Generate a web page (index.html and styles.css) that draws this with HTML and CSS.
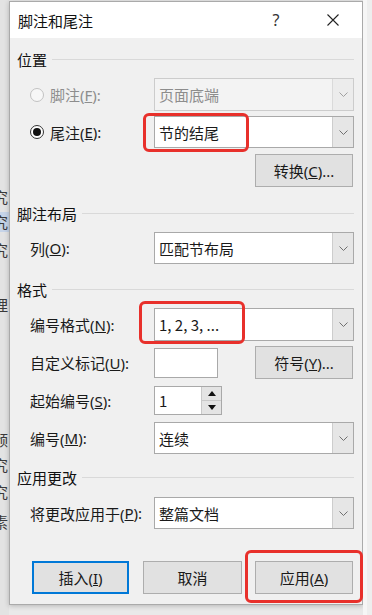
FILE: index.html
```html
<!DOCTYPE html>
<html lang="zh-CN">
  <head>
    <meta charset="UTF-8" />
    <meta name="viewport" content="width=device-width, initial-scale=1.0" />
    <title>脚注和尾注</title>
    <link rel="stylesheet" href="styles.css">
  </head>
  <body>
    <div class="desk">
      <div class="edge-left">
        <div class="frag f1">究</div>
        <div class="frag f2 hl">究</div>
        <div class="frag f3">究</div>
        <div class="frag f4">理</div>
        <div class="frag f5">颁</div>
        <div class="frag f6">究</div>
        <div class="frag f7">究</div>
        <div class="frag f8">素</div>
      </div>

      <div class="dialog">
        <div class="titlebar">
          <span class="title">脚注和尾注</span>
          <span class="help">?</span>
          <span class="close">
            <svg width="12" height="12" viewBox="0 0 12 12">
              <path d="M0.5 0.5 L11.5 11.5 M11.5 0.5 L0.5 11.5" stroke="#222" stroke-width="1.1" fill="none" />
            </svg>
          </span>
        </div>

        <div class="content">
          <div class="group-head g-pos"><span>位置</span><i class="rule"></i></div>

          <div class="row r-foot">
            <label class="opt disabled"><span class="radio"></span>脚注(<u>F</u>):</label>
            <div class="combo disabled">
              <span class="value">页面底端</span>
              <span class="drop"><svg width="9" height="5" viewBox="0 0 9 5"><path d="M0.5 0.5 L4.5 4.5 L8.5 0.5" stroke="#a0a0a0" fill="none" /></svg></span>
            </div>
          </div>

          <div class="row r-end">
            <label class="opt"><span class="radio checked"></span>尾注(<u>E</u>):</label>
            <div class="combo">
              <span class="value">节的结尾</span>
              <span class="drop"><svg width="9" height="5" viewBox="0 0 9 5"><path d="M0.5 0.5 L4.5 4.5 L8.5 0.5" stroke="#707070" fill="none" /></svg></span>
            </div>
          </div>

          <div class="row-end r-conv">
            <button class="btn btn-side">转换(<u>C</u>)...</button>
          </div>

          <div class="group-head g-layout"><span>脚注布局</span><i class="rule"></i></div>

          <div class="row r-col">
            <label>列(<u>O</u>):</label>
            <div class="combo">
              <span class="value">匹配节布局</span>
              <span class="drop"><svg width="9" height="5" viewBox="0 0 9 5"><path d="M0.5 0.5 L4.5 4.5 L8.5 0.5" stroke="#707070" fill="none" /></svg></span>
            </div>
          </div>

          <div class="group-head g-format"><span>格式</span><i class="rule"></i></div>

          <div class="row r-numfmt">
            <label>编号格式(<u>N</u>):</label>
            <div class="combo">
              <span class="value">1, 2, 3, ...</span>
              <span class="drop"><svg width="9" height="5" viewBox="0 0 9 5"><path d="M0.5 0.5 L4.5 4.5 L8.5 0.5" stroke="#707070" fill="none" /></svg></span>
            </div>
          </div>

          <div class="row r-custom">
            <label>自定义标记(<u>U</u>):</label>
            <div class="cell">
              <div class="textbox"></div>
              <button class="btn btn-side">符号(<u>Y</u>)...</button>
            </div>
          </div>

          <div class="row r-start">
            <label>起始编号(<u>S</u>):</label>
            <div class="cell">
              <div class="spin">
                <span class="value">1</span>
                <span class="arrows">
                  <span class="arrow"><svg width="8" height="5" viewBox="0 0 8 5"><path d="M0 5 L4 0 L8 5 Z" fill="#111" /></svg></span>
                  <span class="arrow"><svg width="8" height="5" viewBox="0 0 8 5"><path d="M0 0 L8 0 L4 5 Z" fill="#111" /></svg></span>
                </span>
              </div>
            </div>
          </div>

          <div class="row r-num">
            <label>编号(<u>M</u>):</label>
            <div class="combo">
              <span class="value">连续</span>
              <span class="drop"><svg width="9" height="5" viewBox="0 0 9 5"><path d="M0.5 0.5 L4.5 4.5 L8.5 0.5" stroke="#707070" fill="none" /></svg></span>
            </div>
          </div>

          <div class="group-head g-apply"><span>应用更改</span><i class="rule"></i></div>

          <div class="row r-applyto">
            <label>将更改应用于(<u>P</u>):</label>
            <div class="combo">
              <span class="value">整篇文档</span>
              <span class="drop"><svg width="9" height="5" viewBox="0 0 9 5"><path d="M0.5 0.5 L4.5 4.5 L8.5 0.5" stroke="#707070" fill="none" /></svg></span>
            </div>
          </div>

          <div class="actions">
            <button class="btn btn-insert default">插入(<u>I</u>)</button>
            <button class="btn btn-cancel">取消</button>
            <button class="btn btn-apply">应用(<u>A</u>)</button>
          </div>
        </div>
      </div>

      <div class="edge-right"></div>

      <!-- red annotation boxes drawn over the dialog -->
      <div class="mark mark-end"></div>
      <div class="mark mark-fmt"></div>
      <div class="mark mark-apply"></div>
    </div>
  </body>
</html>
```

FILE: styles.css
```css
* {
  box-sizing: border-box;
}
body {
  margin: 0;
  background: #e6e6e6;
  font-family: "Noto Sans", "Noto Sans CJK SC", sans-serif;
  font-size: 15px;
  color: #1a1a1a;
}
.desk {
  position: relative;
  width: 372px;
  height: 615px;
  display: flex;
  align-items: flex-start;
  overflow: hidden;
  background: #e9e9e9;
}

/* document behind the dialog */
.edge-left {
  width: 9px;
  height: 615px;
  flex-shrink: 0;
  background: #e3e3e3;
  overflow: hidden;
}
.frag {
  height: 20px;
  line-height: 20px;
  margin-left: -7px;
  font-family: "Noto Sans CJK SC", sans-serif;
  font-size: 15px;
  color: #3a3a3a;
}
.frag.hl {
  background: #c6d4e8;
}
.f1 { margin-top: 187px; }
.f2 { margin-top: 5px; }
.f3 { margin-top: 8px; }
.f4 { margin-top: 35px; }
.f5 { margin-top: 115px; }
.f6 { margin-top: 5px; }
.f7 { margin-top: 7px; }
.f8 { margin-top: 10px; }
.edge-right {
  flex: 1;
  height: 615px;
  background: #eeeeee;
  border-left: 4px solid #f6f6f6;
}

/* dialog */
.dialog {
  width: 354px;
  height: 604px;
  margin-top: 1px;
  flex-shrink: 0;
  background: #f0f0f0;
  border: 1px solid #aaaaaa;
  box-shadow: 0 1px 5px rgba(0, 0, 0, 0.22);
  display: flex;
  flex-direction: column;
}
.titlebar {
  height: 36px;
  background: #fff;
  display: flex;
  align-items: center;
  padding: 0 6px 0 8px;
}
.title {
  font-family: "Noto Sans CJK SC", sans-serif;
  font-size: 15px;
  color: #111;
}
.help {
  width: 20px;
  margin-left: auto;
  text-align: center;
  font-size: 16px;
  color: #333;
}
.close {
  width: 46px;
  margin-left: 24px;
  display: flex;
  justify-content: center;
  align-items: center;
}
.content {
  padding: 0 8px 0 7px;
}

.group-head {
  height: 20px;
  display: flex;
  align-items: center;
  font-family: "Noto Sans CJK SC", sans-serif;
  color: #111;
}
.rule {
  flex: 1;
  height: 1px;
  margin-left: 5px;
  background: #d9d9d9;
}
.g-pos { margin-top: 11px; }
.g-layout { margin-top: 16px; }
.g-format { margin-top: 15px; }
.g-apply { margin-top: 13px; }

.row {
  display: grid;
  grid-template-columns: 124px 200px;
  align-items: center;
  padding-left: 13px;
}
.row label {
  display: flex;
  align-items: center;
  white-space: nowrap;
}
.row-end {
  display: flex;
  justify-content: flex-end;
}
.r-foot { height: 33px; margin-top: 9px; }
.r-end { height: 32px; margin-top: 5px; }
.r-conv { height: 33px; margin-top: 6px; }
.r-col { height: 32px; margin-top: 9px; }
.r-numfmt { height: 33px; margin-top: 9px; }
.r-custom { height: 33px; margin-top: 5px; }
.r-start { height: 29px; margin-top: 7px; }
.r-num { height: 32px; margin-top: 7px; }
.r-applyto { height: 32px; margin-top: 10px; }

.opt.disabled {
  color: #8d8d8d;
}
.radio {
  width: 14px;
  height: 14px;
  margin-right: 6px;
  border: 1px solid #333;
  border-radius: 50%;
  background: #fff;
  display: flex;
  align-items: center;
  justify-content: center;
}
.disabled .radio {
  border-color: #c2c2c2;
  background: #f7f7f7;
}
.radio.checked::after {
  content: "";
  width: 8px;
  height: 8px;
  border-radius: 50%;
  background: #111;
}

.combo {
  height: 100%;
  display: flex;
  border: 1px solid #a9a9a9;
  background: #fff;
}
.combo .value,
.spin .value {
  flex: 1;
  display: flex;
  align-items: center;
  padding-left: 4px;
  font-family: "Noto Sans CJK SC", sans-serif;
  white-space: nowrap;
}
.drop {
  width: 21px;
  background: #e6e6e6;
  border-left: 1px solid #cdcdcd;
  display: flex;
  align-items: center;
  justify-content: center;
}
.combo.disabled {
  background: #f3f3f3;
  border-color: #cccccc;
  color: #8d8d8d;
}
.combo.disabled .drop {
  background: #ececec;
  border-left-color: #dadada;
}

.cell {
  height: 100%;
  display: flex;
  align-items: center;
}
.textbox {
  width: 64px;
  height: 30px;
  border: 1px solid #a9a9a9;
  background: #fff;
}
.spin {
  width: 68px;
  height: 29px;
  display: flex;
  border: 1px solid #a9a9a9;
  background: #fff;
}
.arrows {
  width: 20px;
  display: flex;
  flex-direction: column;
  border-left: 1px solid #c9c9c9;
}
.arrow {
  flex: 1;
  display: flex;
  align-items: center;
  justify-content: center;
  background: #e4e4e4;
}
.arrow + .arrow {
  border-top: 1px solid #c9c9c9;
}

.btn {
  height: 33px;
  padding: 0;
  border: 1px solid #adadad;
  background: #e1e1e1;
  font-family: "Noto Sans", "Noto Sans CJK SC", sans-serif;
  font-size: 15px;
  color: #1a1a1a;
}
.btn-side {
  width: 98px;
  margin-left: auto;
  margin-right: 1px;
}
.actions {
  display: flex;
  margin-top: 32px;
  padding-left: 15px;
}
.btn-insert { width: 97px; }
.btn-cancel { width: 99px; margin-left: 14px; }
.btn-apply { width: 98px; margin-left: 13px; }
.btn.default {
  border: 2px solid #0078d7;
}

/* red annotation boxes */
.mark {
  position: absolute;
  border: 3px solid #e8302b;
  border-radius: 6px;
}
.mark-end {
  left: 143px;
  top: 113px;
  width: 106px;
  height: 39px;
}
.mark-fmt {
  left: 139px;
  top: 301px;
  width: 106px;
  height: 43px;
}
.mark-apply {
  left: 245px;
  top: 550px;
  width: 118px;
  height: 53px;
}
```
